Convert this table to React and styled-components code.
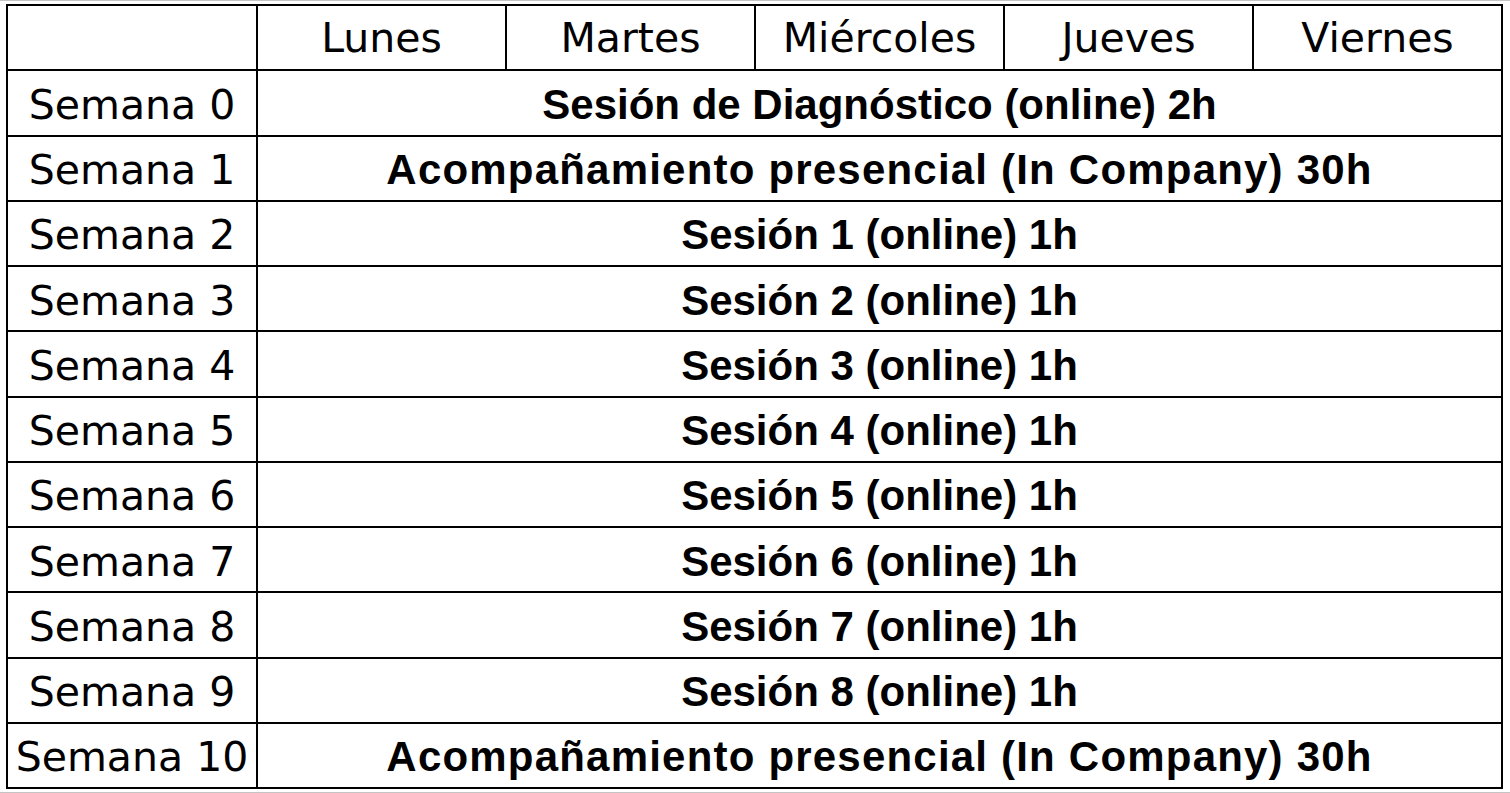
import styled, { createGlobalStyle } from "styled-components";

const GlobalStyle = createGlobalStyle`
  body {
    margin: 0;
    background: #fff;
  }
`;

const Page = styled.div`
  width: 1510px;
  height: 793px;
  box-sizing: border-box;
  border-top: 1px solid #c4c4c4;
  border-bottom: 1px solid #c4c4c4;
  padding: 3px 0 0 6px;
`;

const Grid = styled.div`
  width: 1497px;
  height: 785px;
  box-sizing: border-box;
  display: grid;
  grid-template-columns: 248px repeat(5, 1fr);
  grid-template-rows: repeat(12, 1fr);
  gap: 2px;
  padding: 2px;
  background: #000;
`;

const Cell = styled.div`
  background: #fff;
  display: flex;
  align-items: center;
  justify-content: center;
  box-sizing: border-box;
  padding-top: ${(p) => (p.$head ? "0" : "4px")};
  white-space: nowrap;
  overflow: hidden;
  color: #000;
  font-family: "DejaVu Sans", sans-serif;
  font-size: 41px;
  font-weight: 400;
`;

const Session = styled(Cell)`
  grid-column: 2 / -1;
  font-family: "Liberation Sans", Arial, sans-serif;
  font-size: 42px;
  font-weight: 700;
  letter-spacing: ${(p) => (p.$spread ? "1.2px" : "0")};
`;

const days = ["Lunes", "Martes", "Miércoles", "Jueves", "Viernes"];

const weeks = [
  "Sesión de Diagnóstico (online) 2h",
  "Acompañamiento presencial (In Company) 30h",
  "Sesión 1 (online) 1h",
  "Sesión 2 (online) 1h",
  "Sesión 3 (online) 1h",
  "Sesión 4 (online) 1h",
  "Sesión 5 (online) 1h",
  "Sesión 6 (online) 1h",
  "Sesión 7 (online) 1h",
  "Sesión 8 (online) 1h",
  "Acompañamiento presencial (In Company) 30h",
];

export default function App() {
  return (
    <>
      <GlobalStyle />
      <Page>
        <Grid>
          <Cell $head />
          {days.map((d) => (
            <Cell $head key={d}>{d}</Cell>
          ))}
          {weeks.map((s, i) => [
            <Cell key={"w" + i}>Semana {i}</Cell>,
            <Session key={"s" + i} $spread={s.length > 35}>
              {s}
            </Session>,
          ])}
        </Grid>
      </Page>
    </>
  );
}
